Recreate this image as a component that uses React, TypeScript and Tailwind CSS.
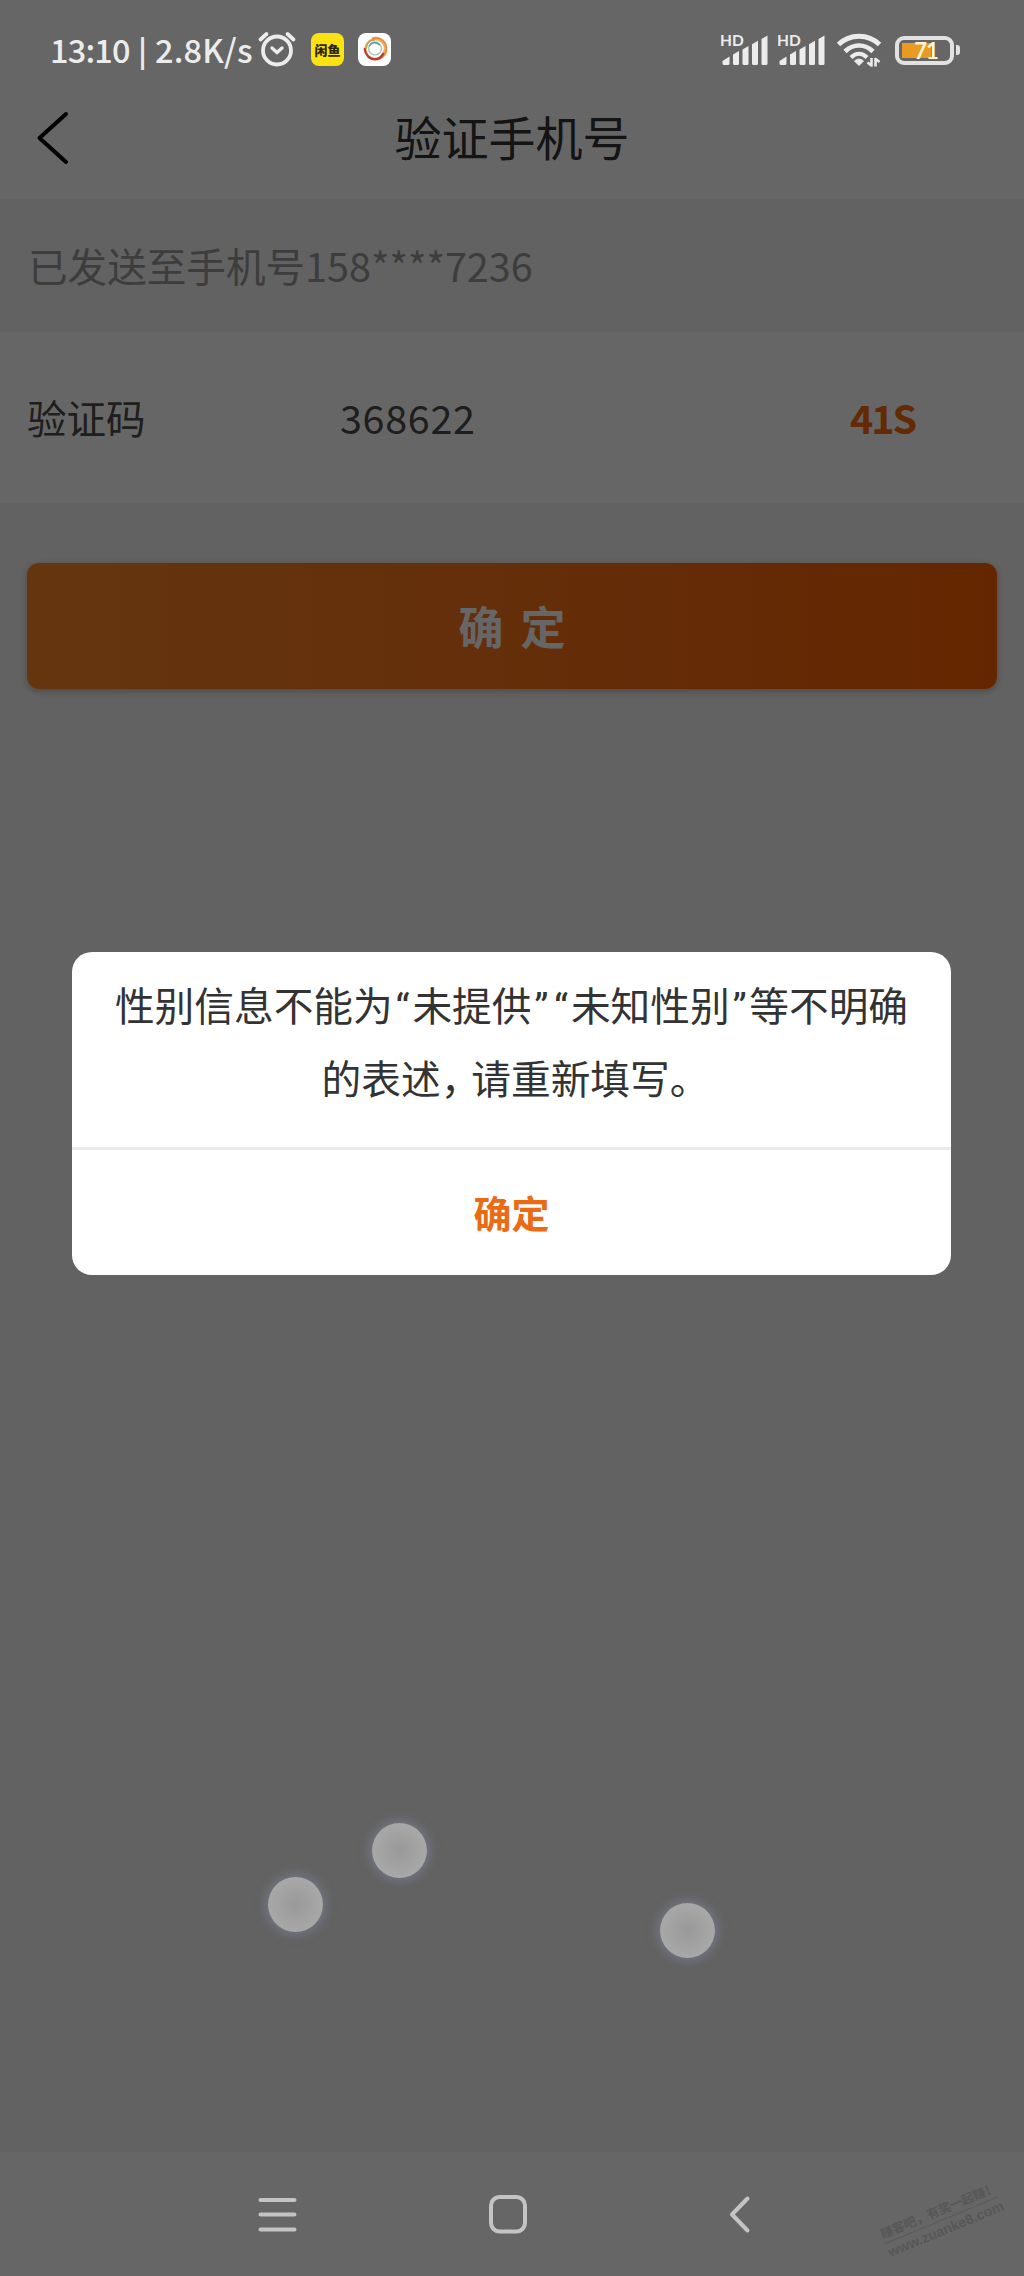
import type { ReactNode } from "react";

function SignalIcon() {
  return (
    <div className="relative h-[32px] w-[48px]">
      <span className="absolute left-0 top-0 font-['Lato'] text-[15.5px] font-bold leading-[13px] text-[#ececec]">
        HD
      </span>
      <svg className="absolute left-0 top-0" width="48" height="32" viewBox="0 0 48 32" fill="#ececec">
        <path d="M2.5 29.5V27l7-4.5v7A1.5 1.5 0 0 1 8 31H4a1.5 1.5 0 0 1-1.5-1.5z" />
        <path d="M13 20.5l6-3.5v12.5a1.5 1.5 0 0 1-1.5 1.5h-3a1.5 1.5 0 0 1-1.5-1.5z" />
        <path d="M22.5 15.5l6-3.5v17.5A1.5 1.5 0 0 1 27 31h-3a1.5 1.5 0 0 1-1.5-1.5z" />
        <path d="M32 10.200l6-3.500v22.800a1.500 1.500 0 0 1-1.500 1.500h-3a1.500 1.500 0 0 1-1.500-1.500z" />
        <path d="M41.500 5l6-3.500v28A1.500 1.500 0 0 1 46 31h-3a1.500 1.500 0 0 1-1.500-1.500z" />
      </svg>
    </div>
  );
}

function WifiIcon() {
  return (
    <svg width="46" height="36" viewBox="0 0 46 36" fill="none" stroke="#ececec">
      <path d="M2.5 12.5C14 1.5 32 1.5 43.5 12.5" strokeWidth="5" />
      <path d="M9 19.5C17 11.5 29 11.5 37 19.5" strokeWidth="4.6" />
      <path d="M15 25.5C20 20.5 26 20.5 31 25.5" strokeWidth="4.2" />
      <path d="M18.5 29c2.7-2.5 6.3-2.5 9 0L23 33.5z" fill="#ececec" strokeWidth="1" />
      <path d="M35.5 26v8.5M36 34l-4.5-3.5M39.5 34.5V26M39 26.5l4.5 3.5" strokeWidth="2.6" />
    </svg>
  );
}

function AlarmIcon() {
  return (
    <svg width="40" height="38" viewBox="0 0 40 38" fill="none" stroke="#ececec" strokeLinecap="round">
      <circle cx="20" cy="20.5" r="14" strokeWidth="3.8" />
      <path d="M15 18l5 4.5 5-4.5" strokeWidth="3.4" />
      <path d="M3.5 9.5l6-5.5M36.5 9.5l-6-5.5" strokeWidth="3.8" />
    </svg>
  );
}

function SwirlIcon() {
  return (
    <span className="flex h-[33px] w-[33px] items-center justify-center rounded-[8px] bg-white">
      <svg width="28" height="28" viewBox="0 0 26 26" fill="none" strokeLinecap="round">
        <circle cx="13" cy="13" r="9" stroke="#e9b27a" strokeWidth="1.8" />
        <path d="M11 3c6-1.5 12 2.5 12.5 9 .3 5-3 8.5-6.5 10" stroke="#e8923c" strokeWidth="2" />
        <path d="M3.5 13c.5 5.5 4.5 9.5 9.5 9.5 4 0 6-2 7.5-5" stroke="#c03a30" strokeWidth="2.2" />
        <path d="M5 12c0-4.5 3.5-7.5 7.5-7.5" stroke="#c7a64a" strokeWidth="1.6" />
        <circle cx="13" cy="12.5" r="6" stroke="#9fcbb4" strokeWidth="1.3" />
        <path d="M8 10c1.5-3 6-4 9-1" stroke="#4f9ab5" strokeWidth="1.3" />
      </svg>
    </span>
  );
}

function Battery({ level }: { level: number }) {
  return (
    <div className="flex items-center gap-[2px]">
      <div className="relative h-[29px] w-[59px] rounded-[9px] border-4 border-[#e2e2e2] p-[3px]">
        <div className="h-full bg-[#e99a20]" style={{ width: `${level * 0.9}%` }} />
        <span className="absolute inset-0 pl-[3px] text-center font-['Lato'] text-[22px] font-bold leading-[21px] tracking-[-1px] text-[#fff3d6]">
          {level}
        </span>
      </div>
      <span className="h-[10px] w-[4px] rounded-r-[3px] bg-[#e2e2e2]" />
    </div>
  );
}

function StatusBar() {
  return (
    <div className="absolute inset-x-0 top-0 z-20 flex h-[98px] items-start justify-between pl-[50px] pr-[64px] pt-[30px]">
      <div className="flex items-center">
        <div className="flex w-[207px] items-center whitespace-nowrap text-[32.5px] font-medium leading-[38px] text-[#ececec]">
          <span className="w-[80px] shrink-0 tracking-[-0.8px]">13:10</span>
          <span className="w-[25px] shrink-0 text-center text-[29px] font-bold leading-[34px]">|</span>
          <span className="tracking-[0.2px]">2.8K/s</span>
        </div>
        <AlarmIcon />
        <span className="ml-[14px] mr-[14px] flex h-[33px] w-[33px] items-center justify-center rounded-[8px] bg-[#fbe211] text-[13px] font-black leading-none text-[#2b2600]">
          闲鱼
        </span>
        <SwirlIcon />
      </div>
      <div className="flex items-center pt-[2px]">
        <SignalIcon />
        <span className="w-[9px]" />
        <SignalIcon />
        <span className="w-[11px]" />
        <WifiIcon />
        <span className="w-[13px]" />
        <Battery level={71} />
      </div>
    </div>
  );
}

// Half-width quote, the CJK font would give it a full cell
function Quote({ children }: { children: ReactNode }) {
  return (
    <span className="inline-block w-[19.7px] text-center font-['Roboto'] leading-none">{children}</span>
  );
}

function Dialog() {
  return (
    <div className="absolute left-[72px] top-[952px] z-20 w-[879px] overflow-hidden rounded-[20px] bg-white">
      <div className="h-[195px] pt-[15px] text-center text-[39.7px] text-[#333]">
        <p className="h-[73px] whitespace-nowrap leading-[73px]">
          性别信息不能为<Quote>“</Quote>未提供<Quote>”</Quote>
          <Quote>“</Quote>未知性别<Quote>”</Quote>等不明确
        </p>
        <p className="h-[74px] whitespace-nowrap pl-[8px] leading-[74px]">
          的表述<span className="tracking-[-9px]">，</span>请重新填写。
        </p>
      </div>
      <button className="block h-[128px] w-full border-t-[3px] border-[#ebebeb] pb-[2px] text-center text-[38px] font-bold leading-none text-[#eb6a14]">
        确定
      </button>
    </div>
  );
}

function TouchDot({ className }: { className: string }) {
  return (
    <span
      className={`absolute z-30 h-[55px] w-[55px] rounded-full bg-[radial-gradient(circle,#999_0%,#a8a8a8_70%)] shadow-[0_0_10px_4px_rgba(130,134,160,0.5)] ${className}`}
    />
  );
}

function NavBar() {
  return (
    <div className="relative z-20 flex h-[124px] items-center bg-[#666] pl-[257px]">
      <svg width="40" height="40" fill="none" stroke="#c4c4c4" strokeWidth="4" strokeLinecap="round">
        <path d="M3.5 6h34M3.5 20.6h34M3.5 35.5h34" />
      </svg>
      <svg className="ml-[191px]" width="40" height="40" fill="none" stroke="#c4c4c4" strokeWidth="4">
        <rect x="3" y="3" width="34" height="34.5" rx="8.5" />
      </svg>
      <svg className="ml-[200px]" width="24" height="40" fill="none" stroke="#c4c4c4" strokeWidth="4" strokeLinecap="round" strokeLinejoin="round">
        <path d="M19.5 4.5L4 20.5l15.5 16" />
      </svg>
      <div className="absolute left-[880px] top-[49px] w-[122px] -rotate-[22.5deg] whitespace-nowrap font-bold text-[#575757]">
        <div className="h-[20px] border-b border-[#5a5a5a] text-[12.5px] leading-[18px]">赚客吧，有奖一起赚！</div>
        <div className="font-['Liberation_Sans'] text-[14px] leading-[18px]">www.zuanke8.com</div>
      </div>
    </div>
  );
}

export default function App() {
  return (
    <div className="relative flex h-[2276px] w-[1024px] flex-col overflow-hidden bg-[#f4f4f4] font-['Noto_Sans_CJK_SC',sans-serif]">
      <StatusBar />

      <header className="relative flex h-[199px] items-end justify-center bg-white pb-[39px]">
        <svg className="absolute left-[34px] top-[110px]" width="38" height="56" fill="none" stroke="#000" strokeWidth="4" strokeLinecap="round" strokeLinejoin="round">
          <path d="M32 4L5.5 28 32 52" />
        </svg>
        <h1 className="text-[47px] leading-[48px] text-[#333]">验证手机号</h1>
      </header>

      <p className="h-[133px] pl-[28px] text-[39.6px] leading-[131px] text-[#999]">
        已发送至手机号158****7236
      </p>

      <div className="flex h-[171px] items-center bg-white pb-[2px] pl-[27px] text-[39.5px] text-[#4d4d4d]">
        <span className="w-[313px]">验证码</span>
        <span className="flex-1 tracking-[0.7px]">368622</span>
        <span className="w-[174px] font-bold tracking-[-2px] text-[#fa6a0a]">41S</span>
      </div>

      <button className="mx-[27px] mt-[60px] flex h-[126px] shrink-0 items-center justify-center gap-[17px] rounded-[12px] bg-linear-to-r from-[#fa8728] to-[#fa6000] text-[45px] font-bold text-white shadow-[0_2px_6px_rgba(120,80,50,0.4)]">
        <span>确</span>
        <span>定</span>
      </button>

      <div className="flex-1" />
      <div className="absolute inset-0 z-10 bg-black/60" />

      <Dialog />
      <TouchDot className="left-[268px] top-[1877px]" />
      <TouchDot className="left-[372px] top-[1823px]" />
      <TouchDot className="left-[660px] top-[1903px]" />
      <NavBar />
    </div>
  );
}
